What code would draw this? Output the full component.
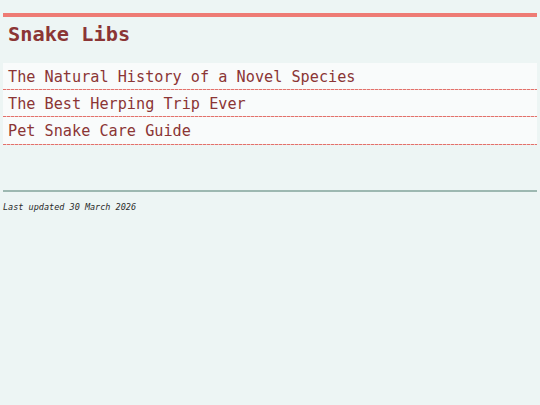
import React from "react";

const stories = [
  "The Natural History of a Novel Species",
  "The Best Herping Trip Ever",
  "Pet Snake Care Guide",
];

export default function App() {
  return (
    <div className="min-h-[405px] bg-[#edf5f4] px-[3px] pt-[13px] font-['DejaVu_Sans_Mono',monospace]">
      <div className="h-[4px] bg-[#ee7b74]" />
      <h1 className="px-[5px] pt-[5px] text-[20.3px] font-bold leading-[24px] text-[#8b3535]">Snake Libs</h1>
      <ul className="mt-[17px]">
        {stories.map((s, i) => (
          <li key={s} className="bg-[#f9fbfb]">
            <div
              className={
                i === 2
                  ? "h-[27px] px-[5px] pt-[4px] text-[15.2px] leading-[20px] text-[#8b3535]"
                  : "h-[26px] px-[5px] pt-[4px] text-[15.2px] leading-[20px] text-[#8b3535]"
              }
            >
              {s}
            </div>
            <div className="h-[1px] bg-[repeating-linear-gradient(90deg,#e2716b_0px,#e2716b_3px,#f3c3bf_3px,#f3c3bf_4px)]" />
          </li>
        ))}
      </ul>
      <div className="mt-[45px] h-[2px] bg-[#9db8b1]" />
      <p className="pt-[9px] text-[8.5px] font-normal italic leading-[12px] text-[#2a2a2a]">Last updated 30 March 2026</p>
    </div>
  );
}
